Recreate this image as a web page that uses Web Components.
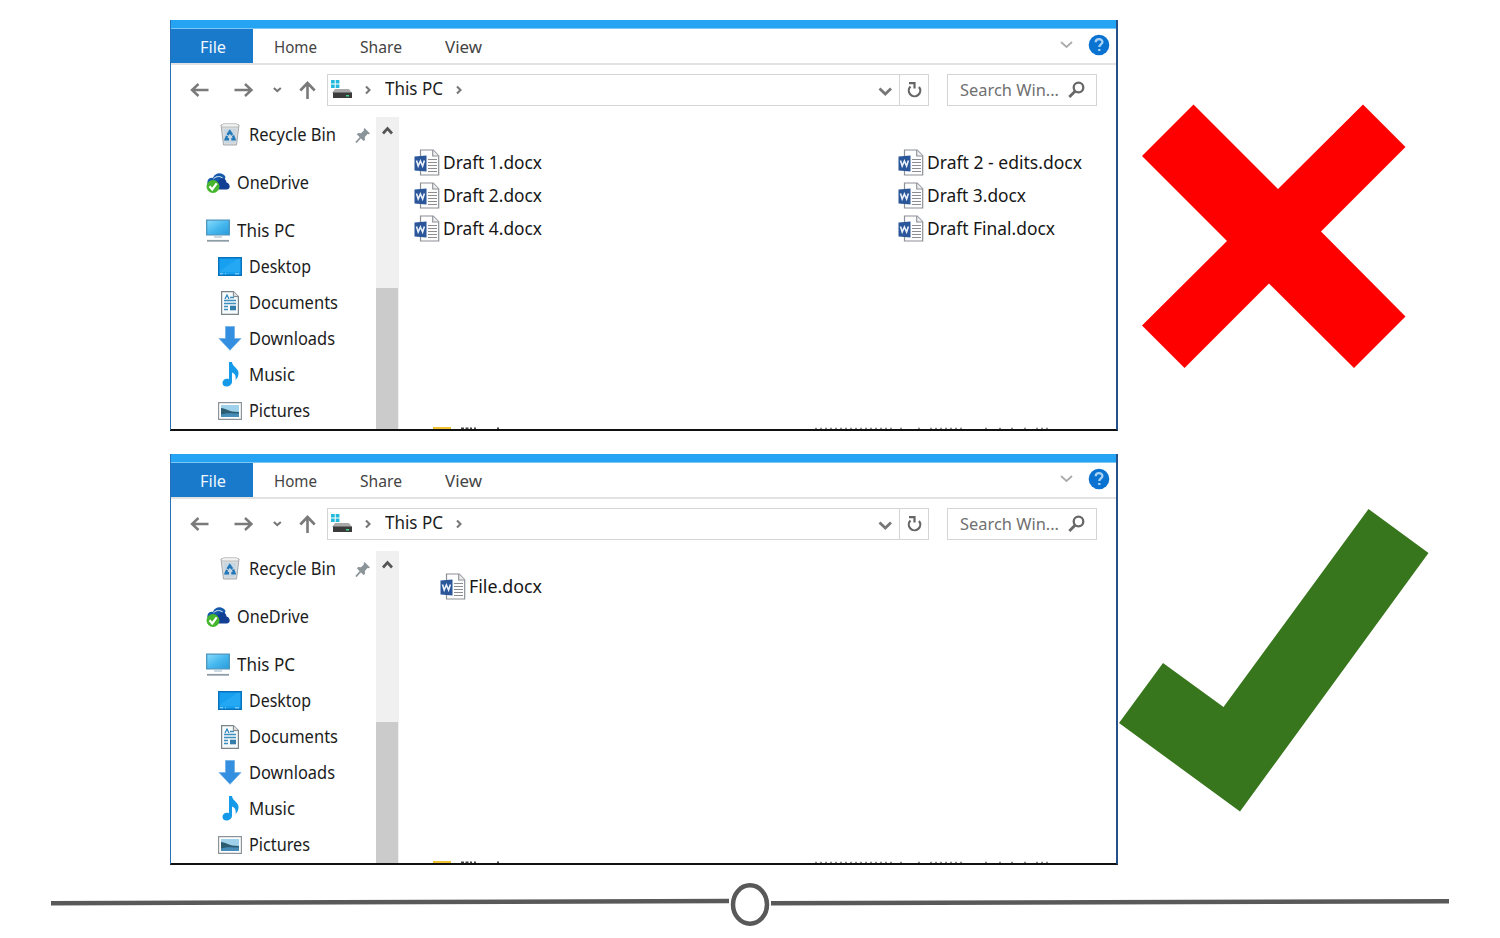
<!DOCTYPE html>
<html lang="en">
<head>
<meta charset="utf-8">
<title>File naming</title>
<style>
body{margin:0;background:#fff;font-family:"Noto Sans","Open Sans",sans-serif;overflow:hidden}
</style>
</head>
<body>
<slide-page></slide-page>
<script>
const define=(name,html,setup)=>customElements.define(name,class extends HTMLElement{
  connectedCallback(){
    if(this.shadowRoot)return;
    const t=document.createElement('template');
    t.innerHTML=typeof html==='function'?html(this):html;
    this.attachShadow({mode:'open'}).append(t.content.cloneNode(true));
    if(setup)setup(this);
  }
});

/* A one-line label whose glyphs are condensed to a given width. */
define('ui-text',`<style>:host{display:block;flex:none;white-space:nowrap;color:#1c1c1c;font-size:17.5px;line-height:24px}
span{display:inline-block;transform-origin:0 50%}</style><span><slot></slot></span>`,el=>{
  const s=el.shadowRoot.querySelector('span'),w=+el.getAttribute('w');
  el.style.width=w+'px';
  s.style.transform=`scaleX(${w/s.getBoundingClientRect().width})`;
});

const icons={
back:[20,16,'<path d="M18.500 8H2M8.500 2 2 8l6.500 6" fill="none" stroke="#7a7a7a" stroke-width="2.400"/>'],
fwd:[20,16,'<path d="M.5 8h17M11 2l6.500 6-6.500 6" fill="none" stroke="#7a7a7a" stroke-width="2.400"/>'],
mini:[9,6,'<path d="M.8 1l3.500 3 3.500-3" fill="none" stroke="#777" stroke-width="2.100"/>'],
up:[18,18,'<path d="M8.500 18V2M1.300 9.500 8.500 2l7.200 7.500" fill="none" stroke="#7a7a7a" stroke-width="2.600"/>'],
crumb:[8,10,'<path d="M2 1.500 5.500 5 2 8.500" fill="none" stroke="#777" stroke-width="2.100"/>'],
down:[14,9,'<path d="M1.500 1.500 7.300 7l5.700-5.500" fill="none" stroke="#777" stroke-width="2.800"/>'],
thin:[13,8,'<path d="M1 1l5.500 5L12 1" fill="none" stroke="#aaa" stroke-width="1.700"/>'],
caret:[12,9,'<path d="M1 7.500 5.500 2.500l4.500 5" fill="none" stroke="#555" stroke-width="2.700"/>'],
reload:[15,17,'<path d="M3.500 5.500A5.700 5.700 0 1 0 12 6M2 2.200h5.500v5.300" fill="none" stroke="#666" stroke-width="2.200"/>'],
search:[17,17,'<circle cx="10.500" cy="6.500" r="4.800" fill="none" stroke="#686868" stroke-width="2.300"/><path d="M7.300 10 1.300 16" stroke="#686868" stroke-width="2.800"/>'],
drive:[23,20,'<path d="M1 1h3.700v3.500H1zM5.700 1h3.700v3.500H5.700zM1 5.500h3.700V9H1zM5.700 5.500h3.700V9H5.700z" fill="#23b9dc"/><path d="M5 10h14l3 4H2z" fill="#a9a9a9"/><path d="M3 13.500h19V19H3z" fill="#3b3b3b"/><path d="M16 16h3v1.500h-3z" fill="#44d68a"/>'],
help:[22,22,'<circle cx="11" cy="11" r="10.300" fill="#0a73d2"/><path d="M7.700 8.200c0-4.200 6.700-4 6.700-.3 0 2.400-3.100 2.600-3.100 5M11.300 15v2.100" fill="none" stroke="#a9d3f5" stroke-width="2.300"/>'],
bin:[20,23,'<path d="M1 2 3.500 22h13L19 2z" fill="#d9dcde" stroke="#a5a9ab"/><path d="M1 2 4 .7h12L19 2l-1 2H2z" fill="#f1f2f2" stroke="#b4b4b4" stroke-width=".8"/><path d="M4 6h12l-1.300 14H5.300z" fill="#c7d6e1"/><path d="m7.500 12 2.300-3.500 2.400 3.500M13 12.500l1.500 3.800h-3.200M9 16.300H5.700l1.400-3.200" fill="none" stroke="#2478b8" stroke-width="2.400"/>'],
onedrive:[24,20,'<path d="M2 12C0 8 3 4 7 5c2-6 10-6 12.500-1l-3 9z" fill="#1559ab"/><path d="M7.500 5.800c3-3 7-3 9.500-.3" fill="none" stroke="#e8f0fa" stroke-width="1"/><path d="M8 16.500c-1-7 1-9 4.500-8.500 2-4.500 8-3 8 1.500 4 1 4.500 7 0 7z" fill="#123f94"/><circle cx="7" cy="13.500" r="6.500" fill="#46b62e"/><path d="m3.500 13.200 2.700 3.200 4.500-6" fill="none" stroke="#fff" stroke-width="2.200"/>'],
pc:[24,23,'<defs><linearGradient id="a" x2="1" y2="1"><stop stop-color="#8bdcfb"/><stop offset=".5" stop-color="#48b9ef"/><stop offset="1" stop-color="#279adb"/></linearGradient></defs><path d="M.7 1.200h22.600v14.600H.7z" fill="url(#a)" stroke="#4a94bd" stroke-width="1.300"/><path d="M8 17.500h8v1H8z" fill="#9db4c2"/><path d="M1 21.800h22" stroke="#8e9ca5" stroke-width="1.800"/>'],
desktop:[24,19,'<path d="M.7.700h22.600v17.600H.7z" fill="#179ff0" stroke="#0872bd" stroke-width="1.400"/><path d="m2 14 17-12h3v13H2z" fill="#24a8f4"/><path d="M2 16.800h3m2 0h1m9 0h4" stroke="#a6dbf7"/>'],
doc:[18,24,'<path d="M.6.600h11.800l5 5v17.800H.6z" fill="#f7fafb" stroke="#7b8588" stroke-width="1.200"/><path d="M12.400.6v5h5" fill="#ddd" stroke="#7b8588"/><path d="M3 9.500h12M3 12.500h12M3 15.500h4M3 18.500h4M9 6.500h4" stroke="#3d90bd" stroke-width="1.300"/><path d="m4 8 2-4 2 4" fill="none" stroke="#2681bb" stroke-width="1.200"/><path d="M9 14.700h6v4.600H9z" fill="#347caa"/>'],
dl:[24,25,'<path d="M7.500.5h9v12H23L12 24.300 1 12.500h6.500z" fill="#348fe0" stroke="#6caee6" stroke-width=".7"/>'],
music:[17,25,'<path d="M7 0h3c.5 5 6.500 6 6.500 11 0 3-1 5-3 7 .8-5-1-6.500-3.500-7.500v9.300C10 25.300.5 26.500.5 21c0-3.500 4-5 6.500-3.800z" fill="#159ae9"/>'],
pic:[24,18,'<path d="M.6.600h22.800v16.800H.6z" fill="#fff" stroke="#8c9499" stroke-width="1.200"/><path d="M3 3h18v12H3z" fill="#9fd2ea"/><path d="M3 6c5 0 7 4 18 4v5H3z" fill="#2c5d70"/><path d="M3 12.500c7-2 10-1 18-1V15H3z" fill="#468dba"/>'],
pin:[16,16,'<path d="m9.500 1 5.500 5.500-1.500.8-1-.2-2.700 3 .2 3-1.500 1L2 7.500l1-1.400 3 .1 2.900-2.700-.2-1.300z" fill="#8b9499"/><path d="m5.500 10.500-4.500 5" stroke="#8b9499" stroke-width="1.800"/>'],
word:[26,27,'<path d="M6.500 1h12.700l5.500 5.700V26H6.500z" fill="#fdfdfd" stroke="#8c9097" stroke-width="1.200"/><path d="M18.700 1v6h6" fill="#eee" stroke="#8c9097" stroke-width="1.100"/><path d="M14 10.500h9M14 13.500h9M14 16.500h9M14 19.500h9M14 22.500h9" stroke="#8d8d91" stroke-width="1.200"/><path d="M.5 7.500 12.500 6.500v16L.5 21.500z" fill="#2b579a"/><path d="m2.500 11.500 1.700 5.500 2.200-5 2.200 5 1.800-5.500" fill="none" stroke="#e9f0f9" stroke-width="1.600"/>']
};
define('ui-icon',el=>{
  const[w,h,p]=icons[el.getAttribute('name')];
  return `<style>:host{display:block;flex:none;width:${w}px;height:${h}px}svg{display:block}</style><svg width="${w}" height="${h}" viewBox="0 0 ${w} ${h}">${p}</svg>`;
});

define('ribbon-tabs',`<style>:host{display:flex;height:34px;border-bottom:2px solid #e2e2e2;align-items:center;box-sizing:content-box}
.file{width:82px;height:34px;background:#1979ca;display:flex;align-items:center;justify-content:center;box-sizing:border-box;padding-left:1px}
ui-text{font-size:16.5px;color:#444;padding-top:1px}.file ui-text{color:#eef7ff}
.right{margin-left:auto;display:flex;align-items:center;gap:15px;padding:0 6px 3px 0}</style>
<div class="file"><ui-text w="26">File</ui-text></div>
<ui-text w="43" style="margin-left:21px">Home</ui-text><ui-text w="42" style="margin-left:43px">Share</ui-text><ui-text w="37" style="margin-left:43px">View</ui-text>
<div class="right"><ui-icon name="thin"></ui-icon><ui-icon name="help"></ui-icon></div>`);

define('address-bar',`<style>:host{display:flex;height:50px;align-items:center;padding:0 19px 0 19px}
.box{display:flex;align-items:center;height:32px;box-sizing:border-box;border:1px solid #d4d4d4}
.path{width:604px;margin-left:10px;padding-left:2px}.re{margin-left:auto;width:28px;height:30px;border-left:1px solid #d4d4d4;display:flex;align-items:center;justify-content:center}
.find{width:150px;margin-left:18px;padding:0 11px 0 12px;justify-content:space-between}.find ui-text{color:#707070;font-size:17px}</style>
<ui-icon name="back"></ui-icon><ui-icon name="fwd" style="margin-left:24px"></ui-icon><ui-icon name="mini" style="margin-left:19px"></ui-icon><ui-icon name="up" style="margin-left:17px"></ui-icon>
<div class="box path"><ui-icon name="drive" style="margin-bottom:2px"></ui-icon><ui-icon name="crumb" style="margin-left:11px"></ui-icon><ui-text w="58" style="margin:0 0 4px 13px">This PC</ui-text><ui-icon name="crumb" style="margin-left:12px"></ui-icon>
<ui-icon name="down" style="margin:3px 0 0 auto"></ui-icon><div class="re" style="margin-left:7px"><ui-icon name="reload"></ui-icon></div></div>
<div class="box find"><ui-text w="99">Search Win...</ui-text><ui-icon name="search"></ui-icon></div>`);

define('nav-item',el=>`<style>:host{display:flex;height:36px;align-items:center;box-sizing:border-box;padding-left:${el.hasAttribute('top')?35:47}px}
.i{width:24px;display:flex;justify-content:center;margin-right:7px}ui-text{margin-bottom:2px}ui-icon[name=pin]{margin-left:19px}</style>
<div class="i"><ui-icon name="${el.getAttribute('icon')}"></ui-icon></div><ui-text w="${el.getAttribute('w')}"><slot></slot></ui-text>${el.hasAttribute('pinned')?'<ui-icon name="pin"></ui-icon>':''}`);

define('nav-pane',`<style>:host{display:flex;width:228px}.list{width:205px}.bar{width:23px;background:#f0f0f0;margin-top:2px;display:flex;flex-direction:column;align-items:center}
.bar ui-icon{margin-top:9px}.thumb{width:22px;flex:1;margin:153px 1px 0 0;background:#cbcbcb}nav-item[gap]{margin-top:12px}.list{padding-top:2px}</style>
<div class="list"><nav-item icon="bin" w="87" pinned>Recycle Bin</nav-item><nav-item top gap icon="onedrive" w="72">OneDrive</nav-item><nav-item top gap icon="pc" w="58">This PC</nav-item>
<nav-item icon="desktop" w="62">Desktop</nav-item><nav-item icon="doc" w="89">Documents</nav-item><nav-item icon="dl" w="86">Downloads</nav-item><nav-item icon="music" w="46">Music</nav-item><nav-item icon="pic" w="61">Pictures</nav-item></div>
<div class="bar"><ui-icon name="caret"></ui-icon><div class="thumb"></div></div>`);

define('file-item',el=>`<style>:host{display:flex;align-items:center;height:33px;gap:3px}ui-text{font-size:18px;color:#161616;margin-bottom:1px}</style><ui-icon name="word"></ui-icon><ui-text w="${el.getAttribute('w')}"><slot></slot></ui-text>`);

define('explorer-window',`<style>:host{display:flex;flex-direction:column;flex:none;width:948px;height:411px;box-sizing:border-box;border-left:1px solid #2770b8;border-right:2px solid #25508a;border-bottom:2px solid #111;overflow:hidden;background:#fff}
.strip{height:8px;border-bottom:1px solid #7bc7f8;background:#24a4f3;flex:none}
.main{display:flex;height:316px}.content{flex:1;display:flex;flex-direction:column;justify-content:space-between;padding-top:31px}
.peek{display:block}</style>
<div class="strip"></div><ribbon-tabs></ribbon-tabs><address-bar></address-bar>
<div class="main"><nav-pane></nav-pane><div class="content"><slot></slot>
<svg class="peek" width="717" height="2" viewBox="0 0 717 2"><path d="M34 0h18v2H34z" fill="#f2c230"/><path d="M62 1.200h11m2 0h2m21 0h2" stroke="#444" stroke-width="1.500" stroke-dasharray="3 1.500"/><path d="M416 1.300h79m6 0h3m15 0h3m9 0h33m22 0h5m9 0h3m9 0h4m9 0h3m9 0h12" stroke="#888" stroke-width="1.200" stroke-dasharray="2 3"/></svg></div></div>`);

define('cross-mark',`<style>:host,svg{display:block}</style><svg width="382" height="411" viewBox="1118 20 382 411"><path fill="#f00" d="M1193.500 104.500 1278 189l85-84.500 42.500 42.500-84.500 84.500 84.500 85-51.500 51.500-85-84.500-84.500 84.500-42.500-42.500 85-84.500-85-85z"/></svg>`);
define('check-mark',`<style>:host,svg{display:block}</style><svg width="382" height="411" viewBox="1118 454 382 411"><path fill="#38761d" d="m1119 723 44-60 60.500 44L1368.500 509l60 44L1240 811.500z"/></svg>`);
define('slide-divider',`<style>:host,svg{display:block}</style><svg width="1500" height="73" viewBox="0 865 1500 73"><g fill="none" stroke="#595959" stroke-width="4.500"><path d="M51 903.300 729 901M771 903.300 1449 901.200"/><ellipse cx="750" cy="904.500" rx="17" ry="19.200"/></g></svg>`);

define('slide-page',`<style>:host{display:flex;flex-direction:column;width:1500px;height:938px}
.row{display:flex;padding-left:170px;height:411px}.row:first-of-type{margin:20px 0 23px}
.files{display:grid;grid-template-columns:484px 1fr;padding-left:15px}.one{padding:0 0 0 41px;margin-top:-10px}</style>
<div class="row"><explorer-window><div class="files"><file-item w="99">Draft 1.docx</file-item><file-item w="155">Draft 2 - edits.docx</file-item><file-item w="99">Draft 2.docx</file-item><file-item w="99">Draft 3.docx</file-item><file-item w="99">Draft 4.docx</file-item><file-item w="128">Draft Final.docx</file-item></div></explorer-window><cross-mark></cross-mark></div>
<div class="row"><explorer-window><div class="one"><file-item w="73">File.docx</file-item></div></explorer-window><check-mark></check-mark></div>
<slide-divider></slide-divider>`);
</script>
</body>
</html>
